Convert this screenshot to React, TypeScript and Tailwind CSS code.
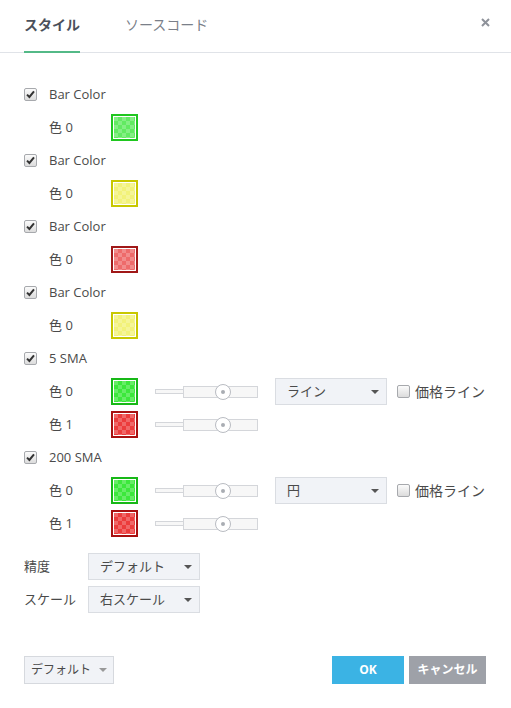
import React from "react";

const font = "font-['Open_Sans','Noto_Sans_CJK_JP',sans-serif]";

type Swatch = { border: string; fill: string };

const swatches = {
  barGreen: { border: "#1fc71f", fill: "#62ea62" },
  barYellow: { border: "#c8c800", fill: "#f2f27a" },
  barRed: { border: "#a01818", fill: "#ee6a6a" },
  green: { border: "#17b817", fill: "#3ce83c" },
  red: { border: "#a81010", fill: "#ec3c3c" },
};

function CheckBox({ checked }: { checked?: boolean }) {
  return (
    <span className="flex size-[13px] shrink-0 items-center justify-center rounded-[2px] border border-[#a7a9ad] bg-gradient-to-b from-[#fbfbfb] to-[#dcdcdc]">
      {checked ? (
        <svg width="9" height="9" viewBox="0 0 9 9" aria-hidden="true">
          <path d="M1 4.6 L3.4 7 L8 1.4" fill="none" stroke="#333" strokeWidth="2" />
        </svg>
      ) : null}
    </span>
  );
}

function ColorSwatch({ s, id }: { s: Swatch; id: string }) {
  return (
    <span
      className="flex size-[27px] shrink-0 bg-white p-[1px]"
      style={{ border: `2px solid ${s.border}` }}
    >
      <svg width="21" height="21" viewBox="0 0 21 21" aria-hidden="true">
        <defs>
          <pattern id={id} width="8" height="8" patternUnits="userSpaceOnUse">
            <rect width="8" height="8" fill={s.fill} />
            <rect width="4" height="4" fill="#ffffff" opacity="0.22" />
            <rect x="4" y="4" width="4" height="4" fill="#ffffff" opacity="0.22" />
          </pattern>
        </defs>
        <rect width="21" height="21" fill={`url(#${id})`} />
      </svg>
    </span>
  );
}

function Slider() {
  return (
    <span className="ml-[17px] flex w-[103px] shrink-0 items-center">
      <span className="h-[5px] w-[28px] border border-r-0 border-[#d4d6da] bg-[#f7f7f7]" />
      <span className="relative flex h-[12px] flex-1 items-center border border-[#d4d6da] bg-[#f7f7f7]">
        <span className="absolute left-[31px] flex size-[16px] items-center justify-center rounded-full border border-[#b9bcc2] bg-white">
          <span className="size-[4px] rounded-full bg-[#a9adb3]" />
        </span>
      </span>
    </span>
  );
}

function Caret({ color = "#555" }: { color?: string }) {
  return (
    <svg width="8" height="4" viewBox="0 0 8 4" aria-hidden="true">
      <path d="M0 0 H8 L4 4 Z" fill={color} />
    </svg>
  );
}

function Select({ label, width }: { label: string; width: string }) {
  return (
    <span
      className={`flex h-[27px] ${width} items-center justify-between border border-[#dadde2] bg-[#f1f3f7] pl-[11px] pr-[7px] text-[13px] text-[#4a4a4a]`}
    >
      {label}
      <Caret />
    </span>
  );
}

function Row({ children }: { children: React.ReactNode }) {
  return <div className="flex h-[33px] items-center">{children}</div>;
}

function Title({ text }: { text: string }) {
  return (
    <Row>
      <CheckBox checked />
      <span className="ml-[12px] text-[13px]">{text}</span>
    </Row>
  );
}

function ColorRow({
  label,
  s,
  id,
  slider,
  extra,
}: {
  label: string;
  s: Swatch;
  id: string;
  slider?: boolean;
  extra?: string;
}) {
  return (
    <Row>
      <span className="ml-[25px] w-[62px] text-[13px]">{label}</span>
      <ColorSwatch s={s} id={id} />
      {slider ? <Slider /> : null}
      {extra ? (
        <>
          <span className="ml-[17px]">
            <Select label={extra} width="w-[112px]" />
          </span>
          <span className="ml-[10px] flex items-center gap-[5px] text-[14px]">
            <CheckBox />
            価格ライン
          </span>
        </>
      ) : null}
    </Row>
  );
}

export default function App() {
  return (
    <div className={`flex h-[708px] w-[511px] flex-col bg-white text-[#4a4a4a] ${font}`}>
      <header className="flex h-[53px] items-stretch border-b border-[#e0e3e8] pl-[24px] pr-[21px]">
        <div className="-mb-px flex items-center whitespace-nowrap border-b-2 border-[#53b987] pb-[2px] text-[14px] font-bold text-[#4b505b]">
          スタイル
        </div>
        <div className="ml-[45px] flex items-center whitespace-nowrap pb-[4px] text-[14px] text-[#7a7f89]">
          ソースコード
        </div>
        <div className="ml-auto flex items-center pb-[7px]">
          <svg width="9" height="9" viewBox="0 0 9 9" aria-hidden="true">
            <path d="M1 1 L8 8 M8 1 L1 8" stroke="#8e929a" strokeWidth="2" />
          </svg>
        </div>
      </header>

      <main className="flex flex-col px-[24px] pt-[25px]">
        <Title text="Bar Color" />
        <ColorRow label="色 0" s={swatches.barGreen} id="p1" />
        <Title text="Bar Color" />
        <ColorRow label="色 0" s={swatches.barYellow} id="p2" />
        <Title text="Bar Color" />
        <ColorRow label="色 0" s={swatches.barRed} id="p3" />
        <Title text="Bar Color" />
        <ColorRow label="色 0" s={swatches.barYellow} id="p4" />
        <Title text="5 SMA" />
        <ColorRow label="色 0" s={swatches.green} id="p5" slider extra="ライン" />
        <ColorRow label="色 1" s={swatches.red} id="p6" slider />
        <Title text="200 SMA" />
        <ColorRow label="色 0" s={swatches.green} id="p7" slider extra="円" />
        <ColorRow label="色 1" s={swatches.red} id="p8" slider />

        <div className="mt-[10px] flex h-[33px] items-center text-[13px]">
          <span className="w-[64px]">精度</span>
          <Select label="デフォルト" width="w-[112px]" />
        </div>
        <div className="flex h-[33px] items-center text-[13px]">
          <span className="w-[64px]">スケール</span>
          <Select label="右スケール" width="w-[112px]" />
        </div>
      </main>

      <footer className="mt-[40px] flex items-center justify-between pl-[24px] pr-[25px]">
        <button className="flex h-[28px] w-[90px] items-center justify-center gap-[8px] border border-[#d6d9de] bg-[#f1f3f7] text-[12px] text-[#4a4a4a]">
          デフォルト
          <Caret color="#999" />
        </button>
        <div className="flex gap-[5px]">
          <button className="h-[28px] w-[72px] bg-[#3bb3e4] text-[12px] font-bold text-white">
            OK
          </button>
          <button className="h-[28px] w-[77px] bg-[#9ea1a8] text-[12px] font-bold text-white">
            キャンセル
          </button>
        </div>
      </footer>
    </div>
  );
}
